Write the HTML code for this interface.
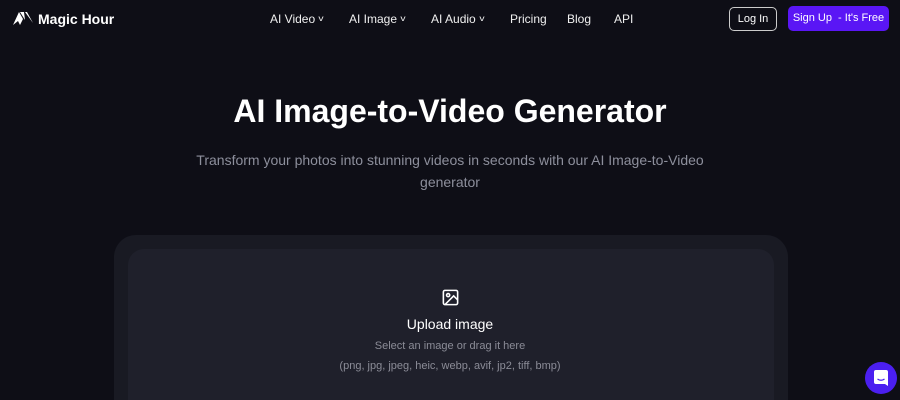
<!DOCTYPE html>
<html><head><meta charset="utf-8"><style>
*{margin:0;padding:0;box-sizing:border-box}
html,body{width:900px;height:400px;overflow:hidden}
body{background:#0e0e16;font-family:"Liberation Sans",Arial,sans-serif;color:#fff;position:relative}
.a{position:absolute}
.nav{font-size:12px;color:#f0f0f0;top:12px}
.nav span.c{font-size:8px;margin-left:4px;display:inline-block;transform:scaleX(1.3) translateY(-2px)}
</style></head><body>
<svg class="a" style="left:13px;top:10px" width="20" height="17" viewBox="0 0 20 17"><path d="M0 15 L6 2 L10 9 L7 15 L5 11 Z" fill="#fff"/><path d="M7 2 L11 2 L12 10 Z" fill="#fff"/><path d="M12 2 L14 2 L20 13 Z" fill="#fff"/></svg>
<div class="a" style="left:38px;top:11px;font-size:14px;font-weight:bold">Magic Hour</div>
<div class="a nav" style="left:270px">AI Video<span class="c">v</span></div>
<div class="a nav" style="left:349px">AI Image<span class="c">v</span></div>
<div class="a nav" style="left:431px">AI Audio<span class="c">v</span></div>
<div class="a nav" style="left:510px">Pricing</div>
<div class="a nav" style="left:567px">Blog</div>
<div class="a nav" style="left:614px">API</div>
<div class="a" style="left:729px;top:7px;width:48px;height:24px;border:1px solid #ccc;border-radius:5px;font-size:11px;text-align:center;line-height:22px">Log In</div>
<div class="a" style="left:788px;top:6px;width:101px;height:25px;background:#5a16f5;border-radius:5px;font-size:11px;text-align:center;line-height:25px">Sign Up &nbsp;- It's Free</div>
<div class="a" style="left:0;width:900px;top:93px;text-align:center;font-size:32px;font-weight:bold">AI Image-to-Video Generator</div>
<div class="a" style="left:180px;width:540px;top:149px;text-align:center;font-size:14px;line-height:22px;color:#8d8f9c">Transform your photos into stunning videos in seconds with our AI Image-to-Video generator</div>
<div class="a" style="left:114px;top:235px;width:674px;height:165px;background:#191a23;border-radius:22px 22px 0 0"></div>
<div class="a" style="left:128px;top:249px;width:646px;height:151px;background:#1f202b;border-radius:16px 16px 0 0"></div>
<svg class="a" style="left:441px;top:288px" width="19" height="19" viewBox="0 0 24 24" fill="none" stroke="#fff" stroke-width="2"><rect x="3" y="3" width="18" height="18" rx="2"/><circle cx="9" cy="9" r="2"/><path d="M21 15l-5-5L5 21"/></svg>
<div class="a" style="left:0;width:900px;top:316px;text-align:center;font-size:14px">Upload image</div>
<div class="a" style="left:0;width:900px;top:340px;text-align:center;font-size:11px;color:#8b8c97">Select an image or drag it here</div>
<div class="a" style="left:0;width:900px;top:360px;text-align:center;font-size:11px;color:#8b8c97">(png, jpg, jpeg, heic, webp, avif, jp2, tiff, bmp)</div>
<div class="a" style="left:865px;top:362px;width:32px;height:32px;border-radius:50%;background:#4b1ff0"></div>
<svg class="a" style="left:873px;top:369px" width="16" height="18" viewBox="0 0 16 18"><path d="M3 1h10a2 2 0 0 1 2 2v14l-3-2H3a2 2 0 0 1-2-2V3a2 2 0 0 1 2-2z" fill="#fff"/><path d="M4.5 10q3.5 2.5 7 0" stroke="#4b1ff0" stroke-width="1.2" fill="none"/></svg>
</body></html>
